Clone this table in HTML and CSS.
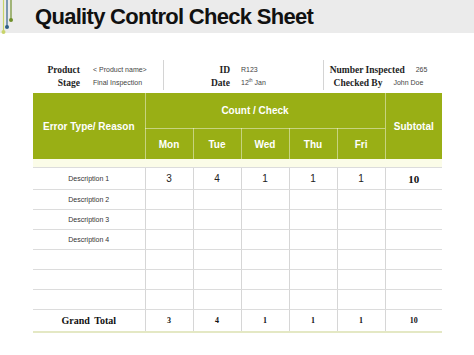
FILE: index.html
```html
<!DOCTYPE html>
<html>
<head>
<meta charset="utf-8">
<link rel="stylesheet" href="styles.css">
</head>
<body>
<div class="titlebar">
  <svg class="logo" width="16" height="33" viewBox="0 0 16 33">
    <line x1="3.5" y1="0" x2="3.5" y2="32" stroke="#c8d46a" stroke-width="1.2"/>
    <circle cx="3.5" cy="32" r="2" fill="#c8d46a"/>
    <line x1="7" y1="0" x2="7" y2="27" stroke="#2f5f86" stroke-width="1.2"/>
    <circle cx="7" cy="27" r="2" fill="#2f5f86"/>
    <line x1="11" y1="0" x2="11" y2="20" stroke="#6f8f2a" stroke-width="1.2"/>
    <circle cx="11" cy="20" r="2" fill="#6f8f2a"/>
  </svg>
  <h1 class="title">Quality Control Check Sheet</h1>
</div>

<div class="info">
  <div class="group g1">
    <span class="lbl">Product</span><span class="val">&lt; Product name&gt;</span>
    <span class="lbl">Stage</span><span class="val">Final Inspection</span>
  </div>
  <div class="group g2">
    <span class="lbl">ID</span><span class="val">R123</span>
    <span class="lbl">Date</span><span class="val">12<sup>th</sup> Jan</span>
  </div>
  <div class="group g3">
    <div class="line"><span class="lbl">Number Inspected</span><span class="val">265</span></div>
    <div class="line"><span class="lbl">Checked By</span><span class="val">John Doe</span></div>
  </div>
</div>

<table class="sheet">
  <colgroup>
    <col class="c-desc"><col class="c-day"><col class="c-day"><col class="c-day"><col class="c-day"><col class="c-day"><col class="c-sub">
  </colgroup>
  <thead>
    <tr class="h1">
      <th rowspan="2" class="first">Error Type/ Reason</th>
      <th colspan="5" class="count">Count / Check</th>
      <th rowspan="2">Subtotal</th>
    </tr>
    <tr class="h2">
      <th>Mon</th><th>Tue</th><th>Wed</th><th>Thu</th><th>Fri</th>
    </tr>
  </thead>
  <tbody>
    <tr class="spacer"><td colspan="7"></td></tr>
    <tr class="row r-first">
      <td class="desc">Description 1</td>
      <td class="num">3</td><td class="num">4</td><td class="num">1</td><td class="num">1</td><td class="num">1</td>
      <td class="sub">10</td>
    </tr>
    <tr class="row"><td class="desc">Description 2</td><td></td><td></td><td></td><td></td><td></td><td></td></tr>
    <tr class="row"><td class="desc">Description 3</td><td></td><td></td><td></td><td></td><td></td><td></td></tr>
    <tr class="row"><td class="desc">Description 4</td><td></td><td></td><td></td><td></td><td></td><td></td></tr>
    <tr class="row"><td class="desc"></td><td></td><td></td><td></td><td></td><td></td><td></td></tr>
    <tr class="row"><td class="desc"></td><td></td><td></td><td></td><td></td><td></td><td></td></tr>
    <tr class="row"><td class="desc"></td><td></td><td></td><td></td><td></td><td></td><td></td></tr>
    <tr class="row total">
      <td class="gt">Grand Total</td>
      <td class="tn">3</td><td class="tn">4</td><td class="tn">1</td><td class="tn">1</td><td class="tn">1</td>
      <td class="tn">10</td>
    </tr>
  </tbody>
</table>
</body>
</html>
```

FILE: styles.css
```css
html, body {
  margin: 0;
  padding: 0;
  background: #ffffff;
  font-family: "Liberation Sans", Arial, sans-serif;
  color: #222;
}

.titlebar {
  height: 33px;
  background: #ebebeb;
  display: flex;
  align-items: center;
}

.logo {
  flex: none;
  align-self: flex-start;
  overflow: visible;
  margin-right: 19px;
}

.title {
  margin: 0;
  font-size: 22px;
  font-weight: bold;
  color: #111;
  letter-spacing: -0.7px;
  line-height: 1;
  padding-top: 1px;
}

.info {
  display: flex;
  margin-top: 27px;
  margin-left: 33px;
  height: 30px;
}

.group {
  box-sizing: border-box;
  height: 30px;
  padding-top: 3px;
}

.g1, .g2 {
  display: grid;
  grid-template-rows: 13px 13px;
  align-items: center;
}

.g1 {
  width: 130px;
  grid-template-columns: 47px 1fr;
  column-gap: 13px;
}

.g2 {
  width: 160px;
  border-left: 1px solid #d4d4d4;
  grid-template-columns: 66px 1fr;
  column-gap: 11px;
}

.g3 {
  width: 110px;
  border-left: 1px solid #d4d4d4;
  display: flex;
  flex-direction: column;
  align-items: center;
}

.g3 .line {
  height: 13px;
  display: flex;
  align-items: center;
  gap: 11px;
}

.lbl {
  font-family: "Liberation Serif", "Times New Roman", serif;
  font-weight: bold;
  font-size: 9.5px;
  color: #1e1e1e;
  text-align: right;
  white-space: nowrap;
}

.val {
  font-size: 7px;
  color: #444;
  white-space: nowrap;
}

.val sup {
  font-size: 4.5px;
  vertical-align: 3px;
  line-height: 0;
}

.sheet {
  margin-top: 3px;
  margin-left: 33px;
  width: 409px;
  border-collapse: collapse;
  table-layout: fixed;
}

.c-desc { width: 112px; }
.c-day { width: 48px; }
.c-sub { width: 57px; }

.sheet th {
  background: #99af15;
  color: #ffffff;
  font-size: 10px;
  font-weight: bold;
  padding: 0;
  border-left: 1px solid rgba(255, 255, 255, 0.45);
}

.sheet th.first {
  border-left: none;
}

.h1 th {
  height: 35px;
}

.h1 th.count {
  padding-right: 20px;
  border-bottom: 1px solid rgba(255, 255, 255, 0.45);
}

.h2 th {
  height: 29px;
  padding-top: 1px;
}

.spacer td {
  height: 8px;
  padding: 0;
  background: #fbfce8;
  border-bottom: 1px solid #dcdcdc;
}

.row td {
  height: 19px;
  padding: 0;
  text-align: center;
  border-bottom: 1px solid #dcdcdc;
  border-left: 1px solid #d6d6d6;
}

.row td:first-child {
  border-left: none;
}

.r-first td {
  height: 21px;
}

.desc {
  font-size: 7px;
  color: #333;
}

.num {
  font-size: 10px;
  color: #222;
}

.sub {
  font-family: "Liberation Serif", "Times New Roman", serif;
  font-weight: bold;
  font-size: 11px;
  color: #111;
}

.total td {
  height: 21px;
  border-bottom: 2px solid #e4e8c4;
}

.gt {
  font-family: "Liberation Serif", "Times New Roman", serif;
  font-weight: bold;
  font-size: 10px;
  word-spacing: 2px;
  color: #111;
}

.tn {
  font-family: "Liberation Serif", "Times New Roman", serif;
  font-weight: bold;
  font-size: 8px;
  color: #111;
}
```
